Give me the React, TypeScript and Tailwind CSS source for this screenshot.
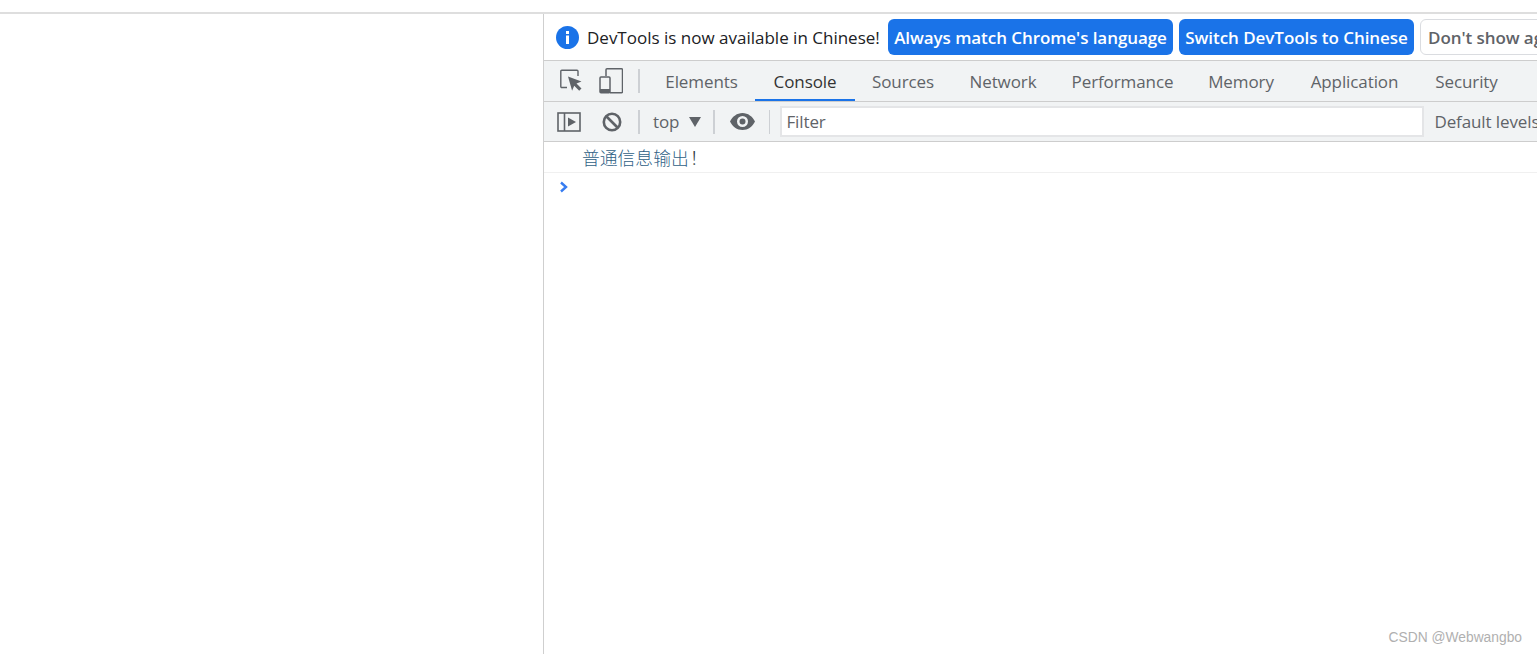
export default function App() {
  const tabs = [
    { name: "Elements", w: "w-[107px]" },
    { name: "Console", w: "w-[100px]" },
    { name: "Sources", w: "w-[96px]" },
    { name: "Network", w: "w-[104px]" },
    { name: "Performance", w: "w-[135px]" },
    { name: "Memory", w: "w-[102px]" },
    { name: "Application", w: "w-[125px]" },
    { name: "Security", w: "w-[99px]" },
  ];
  const sans = "font-['Open_Sans','Noto_Sans',sans-serif]";
  return (
    <div className={`relative h-[654px] w-[1537px] overflow-hidden bg-white ${sans}`}>
      <div className="h-[12px]" />
      <div className="h-[2px] bg-[#dedede]" />
      <div className="flex h-[640px]">
        <div className="w-[543px] shrink-0 border-r border-[#cfcfcf] box-content" />
        <div className="min-w-0 flex-1 overflow-hidden">
          <div className="flex h-[46px] items-center whitespace-nowrap border-b border-[#cdcdcd] box-content">
            <svg className="ml-[12px] shrink-0" width="23" height="23" viewBox="0 0 23 23">
              <circle cx="11.5" cy="11.5" r="11.5" fill="#1a73e8" />
              <rect x="10" y="5" width="3" height="3" fill="#fff" />
              <rect x="10" y="9.5" width="3" height="8.5" fill="#fff" />
            </svg>
            <span className="ml-[8px] w-[301px] shrink-0 pt-[1px] text-[17px] text-[#202124]">DevTools is now available in Chinese!</span>
            <div className="flex h-[36px] w-[285px] shrink-0 items-center justify-center rounded-[6px] bg-[#1a73e8] pt-[1px] text-[17px] font-semibold tracking-[-0.07px] text-white">Always match Chrome's language</div>
            <div className="ml-[6px] flex h-[36px] w-[235px] shrink-0 items-center justify-center rounded-[6px] bg-[#1a73e8] pt-[1px] text-[17px] font-semibold tracking-[-0.05px] text-white">Switch DevTools to Chinese</div>
            <div className="ml-[6px] flex h-[36px] w-[160px] shrink-0 items-center rounded-[6px] border border-[#dadce0] pl-[7px] pt-[1px] text-[17px] font-semibold tracking-[-0.07px] text-[#5f6368]">Don't show again</div>
          </div>
          <div className="flex h-[40px] items-stretch whitespace-nowrap border-b border-[#cdcdcd] bg-[#f1f3f4] box-content">
            <div className="flex w-[104px] shrink-0 items-center">
              <svg className="ml-[16px]" width="24" height="24" viewBox="0 0 24 24" fill="none">
                <path d="M7 18.500H1.800a1 1 0 0 1-1-1V2.300a1 1 0 0 1 1-1H17a1 1 0 0 1 1 1V7" stroke="#5f6368" strokeWidth="1.400" />
                <path d="M8 7.500 21.500 12.500l-5 2 5 5-2.300 2.300-5-5-2.100 5z" fill="#5f6368" />
              </svg>
              <svg className="ml-[15px]" width="24" height="26" viewBox="0 0 24 26" fill="none">
                <path d="M7 8V1.800a1 1 0 0 1 1-1h14.500a1 1 0 0 1 1 1v22a1 1 0 0 1-1 1H11" stroke="#5f6368" strokeWidth="1.500" />
                <rect x="1" y="9" width="10" height="15.700" rx="1" stroke="#5f6368" strokeWidth="1.500" />
                <rect x="1" y="21" width="10" height="3.700" fill="#5f6368" />
              </svg>
              <div className="ml-[15px] h-[24px] w-[2px] bg-[#cdd0d4]" />
            </div>
            {tabs.map((t) =>
              t.name === "Console" ? (
                <div key={t.name} className={`flex shrink-0 items-center justify-center border-b-2 border-[#1a73e8] pt-[4px] text-[17px] tracking-[-0.1px] text-[#333333] ${t.w}`}>
                  {t.name}
                </div>
              ) : (
                <div key={t.name} className={`flex shrink-0 items-center justify-center pt-[2px] text-[17px] tracking-[-0.1px] text-[#5f6368] ${t.w}`}>
                  {t.name}
                </div>
              )
            )}
          </div>
          <div className="flex h-[39px] items-center whitespace-nowrap border-b border-[#cdcdcd] bg-[#f1f3f4] box-content">
            <svg className="ml-[13px] shrink-0" width="24" height="20" viewBox="0 0 24 20" fill="none">
              <rect x="1" y="1" width="22" height="18" stroke="#5f6368" strokeWidth="1.6" />
              <path d="M7.5 1v18" stroke="#5f6368" strokeWidth="1.6" />
              <path d="M11 5.500 19 10l-8 4.500z" fill="#5f6368" />
            </svg>
            <svg className="ml-[21px] shrink-0" width="20" height="20" viewBox="0 0 20 20" fill="none">
              <circle cx="10" cy="10" r="8.2" stroke="#5f6368" strokeWidth="2.6" />
              <path d="M4.500 4.500l11 11" stroke="#5f6368" strokeWidth="2.6" />
            </svg>
            <div className="ml-[16px] h-[24px] w-[2px] shrink-0 bg-[#cdd0d4]" />
            <span className="ml-[13px] pt-[1px] text-[17px] tracking-[-0.1px] text-[#5f6368]">top</span>
            <svg className="ml-[10px] shrink-0" width="12" height="10" viewBox="0 0 12 10">
              <path d="M0 0h12L6 10z" fill="#5f6368" />
            </svg>
            <div className="ml-[12px] h-[24px] w-[2px] shrink-0 bg-[#cdd0d4]" />
            <svg className="ml-[15px] shrink-0" width="25" height="17" viewBox="0 0 25 17">
              <path fillRule="evenodd" d="M12.500 0C7 0 2.500 3.500 0 8.500 2.500 13.500 7 17 12.500 17S22.500 13.500 25 8.500C22.500 3.500 18 0 12.500 0zm0 14a5.500 5.500 0 1 1 0-11 5.500 5.500 0 0 1 0 11zm0-8.500a3 3 0 1 0 0 6 3 3 0 0 0 0-6z" fill="#5f6368" />
            </svg>
            <div className="ml-[14px] h-[24px] w-px shrink-0 bg-[#cdd0d4]" />
            <div className="ml-[10px] flex h-[31px] w-[644px] shrink-0 items-center border-2 border-[#e4e5e7] bg-white pl-[4px] pt-[1px] text-[17px] tracking-[-0.1px] text-[#5f6368]">Filter</div>
            <span className="ml-[10px] pt-[1px] text-[17px] tracking-[-0.1px] text-[#5f6368]">Default levels</span>
          </div>
          <div className="flex h-[30px] items-center border-b border-[#f0f0f0] pl-[38px] box-content font-['Noto_Sans_CJK_SC',sans-serif] text-[17.8px] font-light">
            <span className="text-[#2f5f86]">普通信息输出</span><span className="ml-[1px] text-[#303942]">！</span>
          </div>
          <div className="flex h-[28px] items-center pl-[15px]">
            <svg width="10" height="12" viewBox="0 0 10 12" fill="none">
              <path d="M2 1.500 7 6l-5 4.500" stroke="#367cf1" strokeWidth="2.400" />
            </svg>
          </div>
        </div>
      </div>
      <span className="absolute right-[15px] top-[630px] font-['Liberation_Sans',sans-serif] text-[13.8px] leading-[16px] text-[#b0b0b0]">CSDN @Webwangbo</span>
    </div>
  );
}
